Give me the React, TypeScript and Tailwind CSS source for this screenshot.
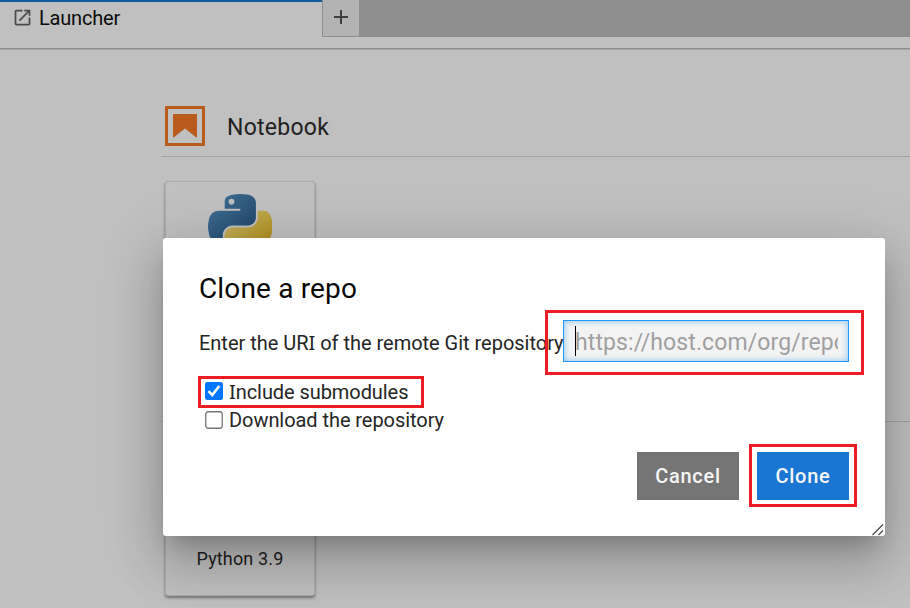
import React from "react";

function LaunchIcon() {
  return (
    <svg width="21" height="21" viewBox="0 0 24 24" fill="#4a4a4a">
      <path d="M19 19H5V5h7V3H5c-1.1 0-2 .9-2 2v14c0 1.1.9 2 2 2h14c1.1 0 2-.9 2-2v-7h-2v7zM14 3v2h3.59l-9.83 9.83 1.41 1.41L19 6.41V10h2V3h-7z" />
    </svg>
  );
}

function PythonLogo() {
  return (
    <svg width="64" height="64" viewBox="0 0 110 110">
      <defs>
        <linearGradient id="pyBlue" x1="0" y1="0" x2="0.8" y2="0.8">
          <stop offset="0" stopColor="#42749a" />
          <stop offset="1" stopColor="#244b6e" />
        </linearGradient>
        <linearGradient id="pyYellow" x1="0.3" y1="0.2" x2="0.75" y2="0.75">
          <stop offset="0" stopColor="#c1ad53" />
          <stop offset="1" stopColor="#b28f20" />
        </linearGradient>
      </defs>
      <path
        fill="url(#pyYellow)"
        d="M85.6 28.7v11.9c0 9.2-7.8 17-16.7 17H42.1c-7.3 0-13.4 6.3-13.4 13.6v25.5c0 7.3 6.3 11.5 13.4 13.6 8.5 2.5 16.6 3 26.8 0 6.7-2 13.4-5.9 13.4-13.6V86.4H55.5V83h40.2c7.8 0 10.7-5.4 13.4-13.6 2.8-8.4 2.7-16.5 0-27.3-1.9-7.8-5.6-13.4-13.4-13.4z"
      />
      <path
        fill="url(#pyBlue)"
        d="M54.9 0C50.3 0 46 .4 42.1 1.1 30.8 3.1 28.7 7.3 28.7 15v10.2h26.8v3.4H18.7c-7.8 0-14.6 4.7-16.7 13.6-2.5 10.2-2.6 16.6 0 27.3 1.9 7.9 6.5 13.6 14.2 13.6h9.2V70.8c0-8.8 7.7-16.6 16.7-16.6h26.8c7.5 0 13.4-6.1 13.4-13.6V15c0-7.3-6.1-12.7-13.4-13.9C64.3.3 59.5 0 54.9 0zM40.4 8.2c2.8 0 5 2.3 5 5.1s-2.2 5.1-5 5.1-5-2.3-5-5.1 2.2-5.1 5-5.1z"
      />
    </svg>
  );
}

function SerifI() {
  return <span className="font-['Noto_Sans',sans-serif]">I</span>;
}

function TabBar() {
  return (
    <header className="h-[49px] border-b border-[#8f8f8f] bg-[#c0c0c0] shadow-[0_1px_1px_rgba(0,0,0,0.12)]">
      <div className="flex h-[37px] bg-[#8f8f8f]">
        <div className="flex h-full w-[322px] border-t-2 border-[#145a9e] bg-[#c0c0c0] pl-3">
          <span className="mt-[5px]">
            <LaunchIcon />
          </span>
          <span className="ml-[6px] mt-[2px] text-[20px] leading-7 tracking-[-0.2px] text-[#0c0c0c]">Launcher</span>
        </div>
        <div className="flex h-full w-[37px] items-start justify-center border-b border-l border-[#8f8f8f] bg-[#b3b3b3]">
          <svg className="mt-[9px]" width="16" height="16" viewBox="0 0 16 16" fill="#404040">
            <path d="M7 1h2v6h6v2H9v6H7V9H1V7h6z" />
          </svg>
        </div>
      </div>
    </header>
  );
}

function Launcher() {
  return (
    <main className="pl-[161px]">
      <div className="flex h-[108px] items-start border-b border-[#a4a4a4] pl-1 pt-[57px]">
        <svg width="40" height="40" viewBox="0 0 40 40">
          <rect x="1.5" y="1.5" width="37" height="37" fill="none" stroke="#b85b1c" strokeWidth="3" />
          <path d="M8 8h24v24l-12-9.5L8 32z" fill="#b85b1c" />
        </svg>
        <h2 className="ml-[22px] mt-[6px] text-[23px] leading-8 tracking-[0.25px] text-[#1f1f1f]">Notebook</h2>
      </div>
      <div className="flex h-[265px] items-start border-b border-[#a4a4a4] pl-1 pt-6">
        <div className="flex h-[415px] w-[150px] shrink-0 flex-col items-center justify-between rounded-[3px] border border-[#aaaaaa] bg-[#c0c0c0] pb-[24px] pt-[12px] shadow-[0_2px_3px_rgba(0,0,0,0.4)]">
          <PythonLogo />
          <span className="text-[18px] leading-6 tracking-[0.15px] text-[#202020]">Python 3.9</span>
        </div>
      </div>
    </main>
  );
}

function CloneDialog() {
  return (
    <div
      role="dialog"
      className="absolute left-[163px] top-[238px] h-[298px] w-[722px] rounded-[3px] bg-white px-9 pt-[34px] shadow-[0_14px_20px_-8px_rgba(0,0,0,0.2),0_30px_48px_4px_rgba(0,0,0,0.14),0_11px_58px_10px_rgba(0,0,0,0.12)]"
    >
      <h1 className="h-[34px] text-[28px] leading-[34px] tracking-[0.15px] text-[#080808]">Clone a repo</h1>
      <div className="mt-[14px] flex h-[42px] items-center">
        <span className="w-[364px] whitespace-nowrap pt-[3px] text-[20px] leading-7 tracking-[-0.02px] text-[#252525]">
          Enter the UR
          <SerifI /> of the remote Git repository
        </span>
        <div className="flex h-[42px] w-[286px] items-center border border-[#2196f3] bg-[#f3f3f3] px-[10px] shadow-[inset_0_0_6px_#7fc0f5]">
          <span className="ml-px h-[30px] w-px shrink-0 bg-black" />
          <span className="-ml-px block overflow-hidden whitespace-nowrap pt-[3px] text-[23px] leading-8 tracking-[0.1px] text-[#a0a0a0]">https://host.com/org/repo.git</span>
        </div>
      </div>
      <div className="mt-4 pl-1.5 text-[20px] leading-7 text-[#252525]">
        <label className="flex h-7 items-center gap-[6px]">
          <svg className="-mt-[3px]" width="18" height="18" viewBox="0 0 18 18">
            <rect width="18" height="18" rx="2.5" fill="#0075ff" />
            <path d="M3.5 9.2l3.8 3.9L14.2 4" fill="none" stroke="white" strokeWidth="2.6" />
          </svg>
          <span className="tracking-[-0.07px]">
            <SerifI />
            nclude submodules
          </span>
        </label>
        <label className="flex h-7 items-center gap-[6px]">
          <svg className="-mt-px" width="18" height="18" viewBox="0 0 18 18">
            <rect x=".75" y=".75" width="16.5" height="16.5" rx="2.5" fill="white" stroke="#767676" strokeWidth="1.3" />
          </svg>
          <span className="tracking-[-0.06px]">Download the repository</span>
        </label>
      </div>
      <div className="mt-[18px] flex h-12 justify-end gap-[18px] text-[20px] font-medium tracking-[0.7px] text-[#f5f5f5]">
        <button className="w-[102px] bg-[#757575]">Cancel</button>
        <button className="w-[92px] bg-[#1976d2]">Clone</button>
      </div>
      <svg className="absolute bottom-0 right-[1px]" width="12" height="12" viewBox="0 0 12 12" stroke="#484848" strokeWidth="1.2">
        <path d="M.5 11L11 .5M6.5 11L11 6.5" />
      </svg>
    </div>
  );
}

export default function App() {
  return (
    <div className="relative h-[608px] w-[910px] overflow-hidden bg-[#c0c0c0] font-['Roboto','Noto_Sans',sans-serif]">
      <TabBar />
      <Launcher />
      <CloneDialog />
      <div className="absolute left-[545px] top-[310px] h-[65px] w-[319px] border-[3px] border-[#ee1c25]" />
      <div className="absolute left-[198px] top-[376px] h-8 w-[226px] border-[3px] border-[#ee1c25]" />
      <div className="absolute left-[749px] top-[444px] h-[63px] w-[108px] border-[3px] border-[#ee1c25]" />
    </div>
  );
}
